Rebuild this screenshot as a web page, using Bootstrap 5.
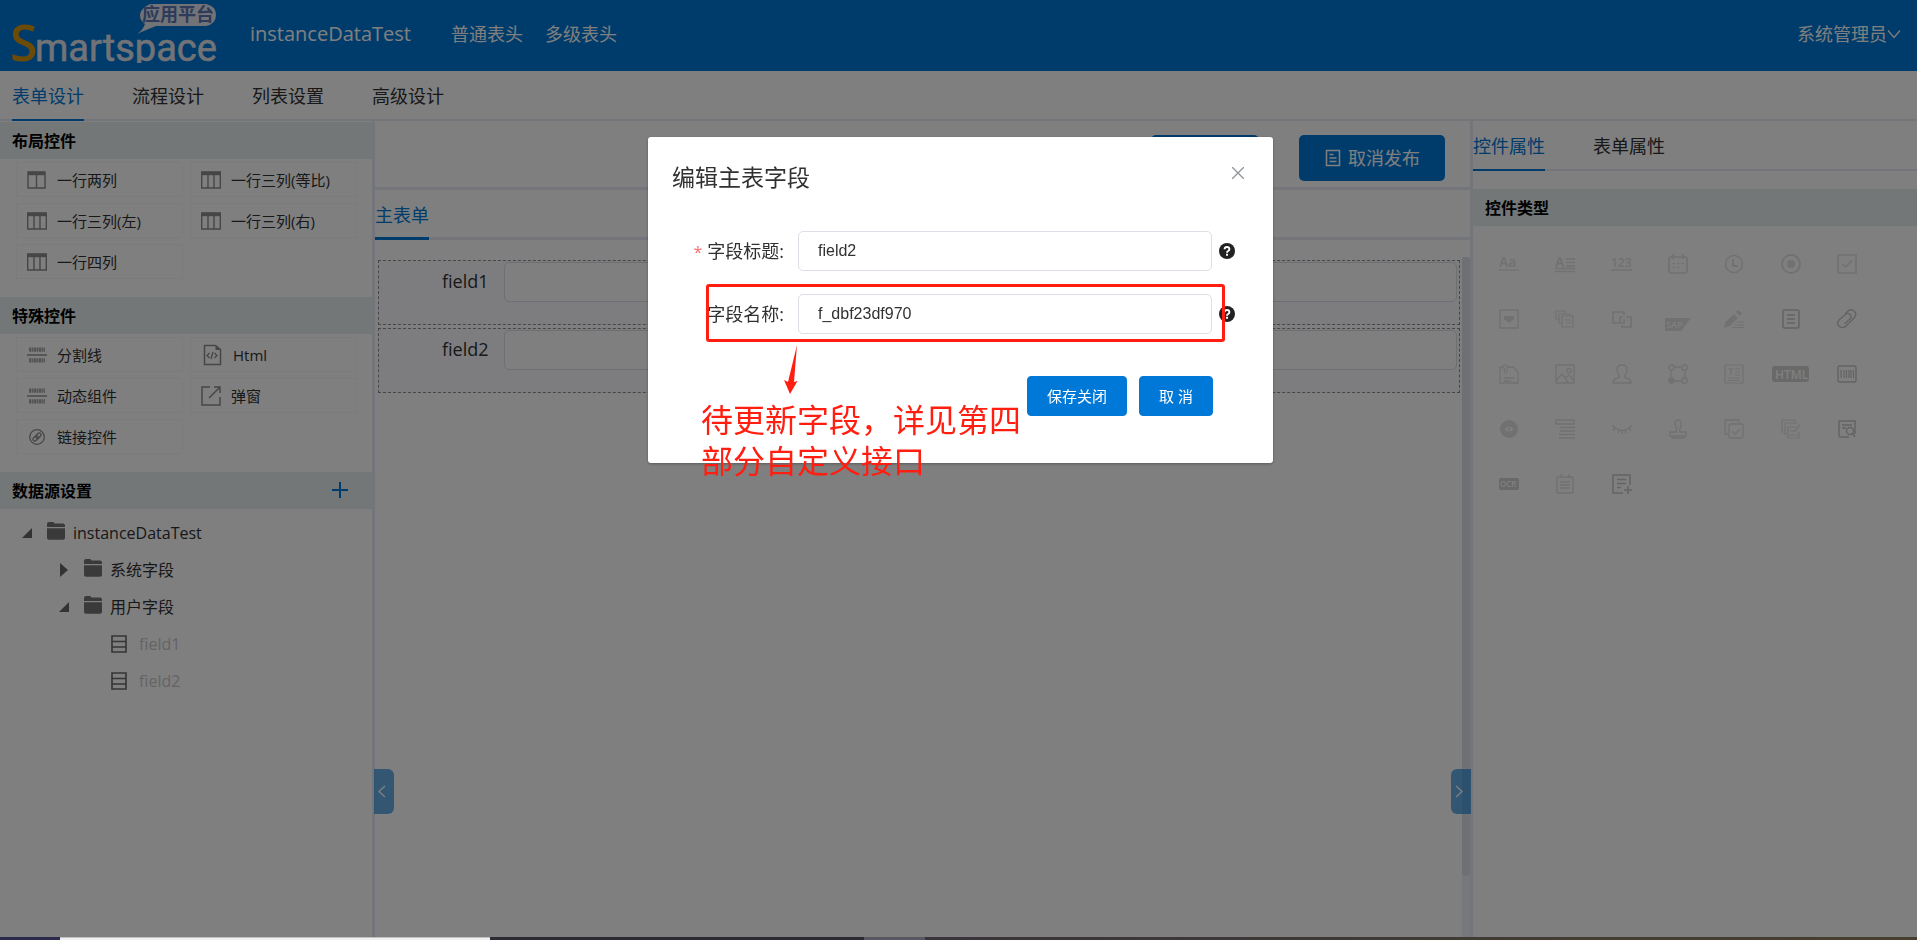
<!DOCTYPE html>
<html lang="zh-CN">
<head>
<meta charset="utf-8">
<meta name="viewport" content="width=device-width, initial-scale=1">
<title>instanceDataTest</title>
<link href="https://cdn.jsdelivr.net/npm/bootstrap@5.3.0/dist/css/bootstrap.min.css" rel="stylesheet">
<style>
:root{--brand:#0078d7;--line:#e9ebf5;--ink:#303133;--band:#e6eff0;--mark:#ff1e10}
body{font-family:"Open Sans","Noto Sans CJK SC",sans-serif;font-size:18px;line-height:24px;color:var(--ink);background:#fff;overflow:hidden}
a{text-decoration:none;color:inherit}
svg{display:block;flex:none}
.ico{fill:none;stroke:currentColor;stroke-width:2}
.topbar{background:var(--brand);min-height:71px;padding:4px 16px 8px 12px;color:#fff}
.topbar .links{gap:22px;margin-left:40px}
.app-title{font-size:20px;margin-left:32px}
.tabline{border-bottom:2px solid var(--line);gap:48px}
.tabline a{display:flex;align-items:center;margin-bottom:-2px;padding-top:2px;border-bottom:2px solid transparent}
.tabline a.active{color:var(--brand);border-color:var(--brand)}
.main-tabs{height:50px;padding-left:12px}
.side-tabs{height:50px}
.form-tabs{height:50px;border-width:3px}
.form-tabs a{margin-bottom:-3px;border-width:3px}
.left-pane{width:375px;border-right:3px solid var(--line);padding-top:1px}
.right-pane{width:447px;border-left:3px solid var(--line)}
.band{height:37px;background:var(--band);color:#000;font-size:16px;font-weight:700;padding:2px 12px 0;margin:0}
.tiles{display:grid;grid-template-columns:1fr 1fr;gap:6px 7px;padding:3px 15px 18px 16px;font-size:15px}
.tile{height:35px;border:1px solid #f7f7fd;background:none;padding:0 10px;gap:10px;color:var(--ink);text-align:left}
.tile svg{color:#8c8c8c}
.tree{font-size:16px;padding:5px 0 0 20px;margin:0;list-style:none}
.tree ul{list-style:none;margin:0;padding-left:37px}
.node{height:37px}
.node .twig{width:14px;margin-right:13px}
.node .folder{margin-right:8px;margin-bottom:3px;color:#757575}
.leaf{padding-left:17px;gap:12px;color:#c8c8c8}
.leaf svg{color:#6a6a6a}
.toolbar{height:69px;border-bottom:3px solid var(--line);padding:14px 25px 6px;gap:40px}
.btn-main{--bs-btn-bg:var(--brand);--bs-btn-border-color:var(--brand);--bs-btn-color:#fff;--bs-btn-hover-bg:#1688e0;--bs-btn-hover-color:#fff;--bs-btn-border-radius:5px;line-height:24px}
.toolbar .btn{font-size:18px;height:46px;min-width:108px;padding:0 25px 0 26px;gap:7px;border-width:0}
.canvas{padding:20px 2px 0 3px;gap:3px;min-width:0}
.form-line{height:65px;border:1px dashed #8c8c8c;background:#fafbff;padding:1px 2px}
.form-line label{flex:none;width:123px;text-align:right;line-height:38px}
.form-line label span{display:block;text-align:left;padding-left:61px}
.form-control{height:40px;border-color:#dcdfe6;border-radius:5px;color:var(--ink)}
.vbar{width:8px;margin-top:17px;background:#eef0f7}
.vbar div{height:91%;background:#dce0e6;border-radius:4px}
.handle{position:absolute;top:648px;width:20px;height:45px;border:0;background:rgba(0,120,215,.6);color:#fff;z-index:2}
.handle-l{left:-1px;border-radius:0 6px 6px 0}
.handle-r{right:-1px;border-radius:6px 0 0 6px}
.kinds{display:grid;grid-template-columns:repeat(7,1fr);padding:10px 42px 0 8px}
.kinds button{height:55px;border:0;background:none;padding:0;color:#e2e2e2;display:grid;place-items:center}
.kinds button.strong{color:#c6c6c6}
.kinds text{font-family:"Open Sans",sans-serif;font-weight:600;fill:currentColor;stroke:none}
.kinds .rev{fill:#fff}
.strip{height:3px;background:#35322f}
.strip .s1{width:60px;background:#2b2a4d}
.strip .s2{width:430px;background:#f0f0f0;border-top:1px solid #c0c0c0}
.strip .s3{width:374px;background:#2c2a32}
.strip .s4{width:61px;background:#5a5662}
.strip .s5{background:linear-gradient(90deg,#38343a,#47402f)}
.dim{position:fixed;inset:0 0 3px;background:rgba(0,0,0,.5);z-index:1050}
.modal{padding-left:4px}
.modal-dialog{max-width:625px;margin:137px auto 0}
.modal-content{border:0;border-radius:3px;padding:26px 24px 47px;box-shadow:0 1px 3px rgba(0,0,0,.3);color:#303133}
.modal-title{font-size:23px;line-height:28px;font-weight:400}
.close-x{border:0;background:none;padding:0 5px 0 0;color:#909399}
.fields{margin-top:40px;gap:23px}
.field-line label{width:126px;padding-right:14px;text-align:right}
.field-line label i{color:#f56c6c;font-style:normal;font-size:16px;margin-right:5px}
.field-line .form-control{width:414px;padding:0 19px;font:16px "Liberation Sans",sans-serif}
.field-line .hint{margin-left:7px;color:#222}
.acts{margin-top:42px;gap:12px;padding-right:36px}
.acts .btn{height:40px;font-size:15px;padding:0 19px;--bs-btn-border-radius:4px}
.ring{position:absolute;left:58px;top:147px;width:519px;height:58px;border:3px solid var(--mark);border-radius:3px;pointer-events:none}
.arrow{position:absolute;left:136px;top:208px;pointer-events:none}
.note{position:absolute;left:53px;top:261px;font-size:32px;line-height:41px;color:var(--mark);margin:0;white-space:nowrap;font-family:"Noto Sans CJK SC",sans-serif}
</style>
</head>
<body class="vh-100 d-flex flex-column">
<svg width="0" height="0" class="position-absolute" aria-hidden="true">
  <symbol id="cols2" viewBox="0 0 20 18"><path d="M1 1h17v16H1z" fill="none" stroke="currentColor" stroke-width="1.4"/><path d="M1 2.5h17" stroke="currentColor" stroke-width="3.4"/><path d="M9.5 3v14" stroke="currentColor" stroke-width="1.4"/></symbol>
  <symbol id="cols3" viewBox="0 0 20 18"><path d="M.7 1h18.6v16H.7z" fill="none" stroke="currentColor" stroke-width="1.4"/><path d="M1 2.5h18" stroke="currentColor" stroke-width="3.4"/><path d="M7 3v14M13 3v14" stroke="currentColor" stroke-width="1.4"/></symbol>
  <symbol id="split" viewBox="0 0 20 18"><path d="M0 9h20" stroke="currentColor" stroke-width="1.4"/><path d="M2 3.6h16M2 14.4h16" stroke="currentColor" stroke-width="4.4" stroke-dasharray="2 .5" opacity=".75"/></symbol>
  <symbol id="folder" viewBox="0 0 18 18"><path d="M0 2q0-2 2-2h4q1 0 1.600 1.500H16q2 0 2 2V5H0zM0 6.200h18V16q0 1.800-2 1.800H2q-2 0-2-1.800z" fill="currentColor"/></symbol>
  <symbol id="rows" viewBox="0 0 16 18"><path d="M1 1h14v16H1zM1 6.500h14M1 12h14" fill="none" stroke="currentColor" stroke-width="1.600"/></symbol>
  <symbol id="help" viewBox="0 0 16 16"><circle cx="8" cy="8" r="8" fill="currentColor"/><path d="M5.600 6.300Q5.700 4 8 4t2.400 2q0 1.300-1.300 2-1.100.6-1.100 1.700" fill="none" stroke="#fff" stroke-width="1.900"/><path d="M7 10.700h2v2H7z" fill="#fff"/></symbol>
</svg>

<header class="topbar d-flex align-items-center">
  <a href="#" aria-label="Smartspace 应用平台">
    <svg width="206" height="59" viewBox="0 0 206 59">
      <path d="M138 0h56q10 2 10 11t-10 11h-50q-8 3-19 8 6-4 8-10-5-3-5-9t10-11z" fill="#e4e6ee"/>
      <text x="130" y="17" font-size="18" font-weight="700" fill="#5c76b4" font-family="Noto Sans CJK SC">应用平台</text>
      <text x="-2" y="57" font-size="50" font-weight="600" fill="#d8960c" font-family="Open Sans">S</text>
      <text x="23" y="57" font-size="38" fill="#e4e6ee" stroke="#e4e6ee" stroke-width=".5" font-family="Roboto">martspace</text>
    </svg>
  </a>
  <span class="app-title">instanceDataTest</span>
  <nav class="links d-flex"><a href="#">普通表头</a><a href="#">多级表头</a></nav>
  <a href="#" class="ms-auto d-flex align-items-center">系统管理员<svg class="ico" width="14" height="10"><path d="M1 1.500l6 7 6-7" stroke-width="1.300"/></svg></a>
</header>

<nav class="tabline main-tabs d-flex flex-shrink-0"><a href="#" class="active">表单设计</a><a href="#">流程设计</a><a href="#">列表设置</a><a href="#">高级设计</a></nav>

<div class="d-flex flex-fill" style="min-height:0">
  <aside class="left-pane flex-shrink-0">
    <h2 class="band d-flex align-items-center">布局控件</h2>
    <div class="tiles">
      <button class="tile d-flex align-items-center"><svg width="20" height="18"><use href="#cols2"/></svg>一行两列</button>
      <button class="tile d-flex align-items-center"><svg width="20" height="18"><use href="#cols3"/></svg>一行三列(等比)</button>
      <button class="tile d-flex align-items-center"><svg width="20" height="18"><use href="#cols3"/></svg>一行三列(左)</button>
      <button class="tile d-flex align-items-center"><svg width="20" height="18"><use href="#cols3"/></svg>一行三列(右)</button>
      <button class="tile d-flex align-items-center"><svg width="20" height="18"><use href="#cols3"/></svg>一行四列</button>
    </div>
    <h2 class="band d-flex align-items-center">特殊控件</h2>
    <div class="tiles">
      <button class="tile d-flex align-items-center"><svg width="20" height="18"><use href="#split"/></svg>分割线</button>
      <button class="tile d-flex align-items-center"><svg class="ico" width="22" height="22" viewBox="0 0 22 22"><path d="M3.500 1.500h11l5 4v15h-16z" stroke-width="1.500"/><path d="M14.500 1v5h5z" fill="currentColor" stroke="none"/><path d="M8.500 9L6 11.500 8.500 14m5-5l2.500 2.500-2.500 2.500M12 8l-2 7" stroke-width="1.300"/></svg>Html</button>
      <button class="tile d-flex align-items-center"><svg width="20" height="18"><use href="#split"/></svg>动态组件</button>
      <button class="tile d-flex align-items-center"><svg class="ico" width="20" height="20" viewBox="0 0 20 20"><path d="M9 1H1v18h18v-8M13 1h6v6M19 1L8 12" stroke-width="1.500"/></svg>弹窗</button>
      <button class="tile d-flex align-items-center"><svg class="ico" width="20" height="18" viewBox="0 0 20 18"><circle cx="10" cy="9" r="7.300" stroke-width="1.300"/><g transform="rotate(-45 10 9)" stroke-width="1.300"><rect x="5" y="7.200" width="6" height="3.600" rx="1.800"/><rect x="9" y="7.200" width="6" height="3.600" rx="1.800"/></g></svg>链接控件</button>
    </div>
    <h2 class="band d-flex align-items-center justify-content-between">数据源设置<button class="border-0 bg-transparent p-0 pb-1 me-2 pe-1" aria-label="添加"><svg class="ico" width="16" height="16" style="color:var(--brand)"><path d="M8 0v16M0 8h16"/></svg></button></h2>
    <ul class="tree">
      <li>
        <div class="node d-flex align-items-center"><svg class="twig" width="14" height="12"><path d="M12 1v10H2z" fill="#666"/></svg><svg class="folder" width="18" height="18"><use href="#folder"/></svg>instanceDataTest</div>
        <ul>
          <li><div class="node d-flex align-items-center"><svg class="twig" width="14" height="14"><path d="M3 0v14l8-7z" fill="#666"/></svg><svg class="folder" width="18" height="18"><use href="#folder"/></svg>系统字段</div></li>
          <li>
            <div class="node d-flex align-items-center"><svg class="twig" width="14" height="12"><path d="M12 1v10H2z" fill="#666"/></svg><svg class="folder" width="18" height="18"><use href="#folder"/></svg>用户字段</div>
            <ul>
              <li class="node leaf d-flex align-items-center"><svg width="16" height="18"><use href="#rows"/></svg>field1</li>
              <li class="node leaf d-flex align-items-center"><svg width="16" height="18"><use href="#rows"/></svg>field2</li>
            </ul>
          </li>
        </ul>
      </li>
    </ul>
  </aside>

  <main class="flex-fill d-flex flex-column position-relative" style="min-width:0">
    <div class="toolbar d-flex justify-content-end">
      <button class="btn btn-main" aria-label="保存"></button>
      <button class="btn btn-main d-flex align-items-center"><svg class="ico" width="16" height="18" viewBox="0 0 16 18"><path d="M1.500 1.500h13v15h-13zM4.500 5.500h4M4.500 9h7M4.500 12.500h7" stroke-width="1.500"/></svg>取消发布</button>
    </div>
    <nav class="tabline form-tabs d-flex flex-shrink-0"><a href="#" class="active">主表单</a></nav>
    <div class="d-flex flex-fill" style="min-height:0">
      <div class="canvas flex-fill d-flex flex-column">
        <div class="form-line d-flex"><label for="f1"><span>field1</span></label><input id="f1" class="form-control flex-fill"></div>
        <div class="form-line d-flex"><label for="f2"><span>field2</span></label><input id="f2" class="form-control flex-fill"></div>
      </div>
      <div class="vbar"><div></div></div>
    </div>
    <button class="handle handle-l d-flex align-items-center p-0 ps-1" aria-label="收起左栏"><svg class="ico" width="8" height="13"><path d="M7 1L1 6.500 7 12" stroke-width="1.300"/></svg></button>
    <button class="handle handle-r d-flex align-items-center p-0 ps-1" aria-label="收起右栏"><svg class="ico" width="8" height="13"><path d="M1 1l6 5.500L1 12" stroke-width="1.300"/></svg></button>
  </main>

  <aside class="right-pane flex-shrink-0">
    <nav class="tabline side-tabs d-flex"><a href="#" class="active">控件属性</a><a href="#">表单属性</a></nav>
    <h2 class="band d-flex align-items-center" style="margin-top:18px">控件类型</h2>
    <div class="kinds">
      <button aria-label="单行文本"><svg class="ico" width="20" height="20"><text x="0" y="13" font-size="14">Aa</text><path d="M0 16h20" stroke-width="1.300"/></svg></button>
      <button aria-label="多行文本"><svg class="ico" width="20" height="20"><text x="0" y="13" font-size="14">A</text><path d="M11 5h9M11 8.500h9M11 12h9M0 14.500h20M0 17.500h20" stroke-width="1.300"/></svg></button>
      <button aria-label="数字"><svg class="ico" width="22" height="20"><text x="0" y="13" font-size="12">123</text><path d="M0 16h21" stroke-width="1.500"/></svg></button>
      <button aria-label="日期"><svg class="ico" width="20" height="20"><rect x="1" y="3" width="18" height="16" rx="2" stroke-width="1.600"/><path d="M5 0v5M15 0v5M4.500 9.500h2.500M9 9.500h2.500M13.500 9.500H16M4.500 13.500h2.500M9 13.500h2.500" stroke-width="1.600"/></svg></button>
      <button aria-label="时间"><svg class="ico" width="20" height="20"><circle cx="10" cy="10" r="8.500" stroke-width="1.500"/><path d="M9 5v7h5"/></svg></button>
      <button aria-label="单选"><svg class="ico" width="20" height="20"><circle cx="10" cy="10" r="9"/><circle cx="10" cy="10" r="4" fill="currentColor" stroke="none"/></svg></button>
      <button aria-label="多选"><svg class="ico" width="20" height="20"><path d="M1 1h18v18H1zM5.500 10l3.500 3 6-6.500" stroke-width="1.600"/></svg></button>

      <button aria-label="下拉"><svg class="ico" width="20" height="20"><path d="M1 1h18v18H1z" stroke-width="1.400"/><path d="M5 7h10v3l-5 4-5-4z" fill="currentColor" stroke="none"/></svg></button>
      <button aria-label="关联"><svg class="ico" width="20" height="20"><path d="M4 10H1V2h9v3M15 7V5H4v9h3M7 7h11v11H7zM10 11h6M10 14h6" stroke-width="1.200"/></svg></button>
      <button aria-label="组合"><svg class="ico" width="20" height="20"><path d="M8 14H1V3h11v3M12 10v4H8V8h3M14 8h5v10h-9v-2" stroke-width="1.600"/></svg></button>
      <button aria-label="SAP"><svg width="26" height="24"><path d="M0 11h26L16 24H0z" fill="currentColor"/><text class="rev" x="1" y="21" font-size="9">SAP</text></svg></button>
      <button aria-label="签名"><svg class="ico" width="20" height="20"><path d="M0 19l1.500-6L10 5l4 4-8 8z" fill="currentColor" stroke="none"/><path d="M12 3l2-2 4 3-2 3z" fill="currentColor" stroke="none"/><path d="M13 13h7M10 16h10M8 18.500h12" stroke-width="1.200"/></svg></button>
      <button class="strong" aria-label="文档"><svg class="ico" width="20" height="20"><rect x="2" y="1" width="16" height="18" rx="1.500" stroke-width="1.500"/><path d="M6 6h8M6 10h8M6 14h8" stroke-width="1.300"/></svg></button>
      <button class="strong" aria-label="附件"><svg class="ico" width="20" height="20"><path d="M8 5l3-3q3-2.500 6 0t1 6l-9 9q-3 3-6.500.5T2 11l7-6q2-1.500 4 .5t.5 4l-6 5.500" stroke-width="1.400"/></svg></button>

      <button aria-label="附件文档"><svg class="ico" width="20" height="20"><path d="M8 3h6l5 5v11H1V3h3M5 14h10M5 17h7" stroke-width="1.300"/><path d="M4 5V2q2-2.500 4 0v6q-1 2-2.500 0V4" stroke-width="1.100"/></svg></button>
      <button aria-label="图片"><svg class="ico" width="20" height="20"><path d="M1 1h18v18H1zM1 17l6-7 6 8M10 14l4-3 5 6" stroke-width="1.400"/><circle cx="14" cy="6.500" r="2.200" stroke-width="1.300"/></svg></button>
      <button aria-label="人员"><svg class="ico" width="20" height="20"><path d="M7.500 12Q5 9 5 6q0-5 5-5t5 5q0 3-2.500 6 0 2 3 2.500Q19 15.500 19 19H1q0-3.500 3.500-4.500 3-.5 3-2.500z" stroke-width="1.400"/></svg></button>
      <button aria-label="部门"><svg class="ico" width="20" height="20"><path d="M3 3h14v14H3z" stroke-width="1.300"/><g fill="#fff" stroke-width="1.400"><circle cx="3.500" cy="3.500" r="2.700"/><circle cx="16.500" cy="3.500" r="2.700"/><circle cx="16.500" cy="16.500" r="2.700"/></g><circle cx="3.500" cy="16.500" r="3.300" fill="currentColor" stroke="none"/></svg></button>
      <button aria-label="富文本"><svg class="ico" width="20" height="20"><path d="M1 1h18v18H1zM4 5h6M7 5v6M11 5h5M11 8h5M11 11h5M4 14h12M4 16.500h12" stroke-width="1.200"/></svg></button>
      <button aria-label="HTML"><svg width="38" height="20"><rect x="0" y="2" width="37" height="16" rx="3" fill="#d2d2d2"/><text class="rev" x="3" y="15" font-size="12">HTML</text></svg></button>
      <button class="strong" aria-label="条码"><svg class="ico" width="20" height="20"><rect x="1" y="2" width="18" height="16" rx="1.500" stroke-width="1.400"/><path d="M4 6v8M7 6v8M9.500 6v8M12 6v8M14 6v8M16.500 6v8" stroke-width="1.200"/></svg></button>

      <button aria-label="查看"><svg width="20" height="20"><circle cx="10" cy="10" r="9" fill="currentColor"/><path d="M5.500 10q4.500-5 9 0-4.500 5-9 0z" fill="#fff"/><circle cx="10" cy="10" r="1.400" fill="currentColor"/></svg></button>
      <button aria-label="列表"><svg class="ico" width="20" height="20"><path d="M1 1h18v4H1zM5 8.500h15M5 12h15M4 15.500h16M4 19h16" stroke-width="1.400"/></svg></button>
      <button aria-label="隐藏"><svg class="ico" width="20" height="20"><path d="M0 6q10 11 20 0M3 9l-2 3M7 11l-1 3M10 12v3M13 11l1 3M17 9l2 3" stroke-width="1.500"/></svg></button>
      <button aria-label="印章"><svg class="ico" width="20" height="20"><path d="M8 13q1.500-3-.5-6Q6 1 10 1t3 6q-2 3-1 6h6v4H2v-4zM4 17v2h12v-2" stroke-width="1.400"/></svg></button>
      <button aria-label="批量选择"><svg class="ico" width="20" height="20"><path d="M4 15H1V1h14v3M8 12l3 3 5-5" stroke-width="1.300"/><rect x="5" y="5" width="14" height="14" rx="2" stroke-width="1.300"/></svg></button>
      <button aria-label="批量编辑"><svg class="ico" width="20" height="20"><path d="M3 13H1V1h13v2M6 15H4V4h12M18 13v6H7V8h8M9 12h4M9 16h8M19 6l-6 7" stroke-width="1.200"/></svg></button>
      <button class="strong" aria-label="查询"><svg class="ico" width="20" height="20"><path d="M12 18H3q-1 0-1-1V2h16v13M5 6h10M5 9h4" stroke-width="1.500"/><circle cx="13" cy="12" r="3.500" stroke-width="1.400"/><path d="M15.500 14.500L18 18" stroke-width="1.400"/></svg></button>

      <button aria-label="OCR"><svg width="20" height="20"><rect y="4" width="20" height="12" rx="2" fill="#d2d2d2"/><text class="rev" x="1" y="13" font-size="8">OCR</text></svg></button>
      <button aria-label="记录"><svg class="ico" width="20" height="20"><rect x="2" y="3" width="16" height="16" rx="1" stroke-width="1.400"/><path d="M6 0v4M14 0v4M5 8h10M5 11h10M5 14h10" stroke-width="1.400"/></svg></button>
      <button class="strong" aria-label="新增表单"><svg class="ico" width="20" height="20"><path d="M11 19H1V1h17v10M5 5.500h9M5 9.500h9M5 13.500h4M16 12v8M12 16h8" stroke-width="1.500"/></svg></button>
    </div>
  </aside>
</div>

<div class="strip d-flex flex-shrink-0"><div class="s1"></div><div class="s2"></div><div class="s3"></div><div class="s4"></div><div class="s5 flex-fill"></div></div>

<div class="dim"></div>
<div class="modal d-block" role="dialog" aria-labelledby="dlg">
  <div class="modal-dialog">
    <form class="modal-content">
      <div class="d-flex justify-content-between">
        <h1 class="modal-title" id="dlg">编辑主表字段</h1>
        <button type="button" class="close-x d-flex" aria-label="关闭"><svg class="ico mt-1" width="12" height="12"><path d="M0 0l12 12M12 0L0 12" stroke-width="1.300"/></svg></button>
      </div>
      <div class="fields d-flex flex-column">
        <div class="field-line d-flex align-items-center"><label for="t1"><i>*</i>字段标题:</label><input id="t1" class="form-control" value="field2"><svg class="hint" width="16" height="16"><use href="#help"/></svg></div>
        <div class="field-line d-flex align-items-center"><label for="t2">字段名称:</label><input id="t2" class="form-control" value="f_dbf23df970"><svg class="hint" width="16" height="16"><use href="#help"/></svg></div>
      </div>
      <div class="acts d-flex justify-content-end">
        <button type="button" class="btn btn-main">保存关闭</button>
        <button type="button" class="btn btn-main">取 消</button>
      </div>
      <div class="ring"></div>
      <svg class="arrow" width="16" height="50"><path d="M13 0l-3 37 3.500-1L6 49 0 35l4 2z" fill="#ff1e10"/></svg>
      <p class="note">待更新字段，详见第四<br>部分自定义接口</p>
    </form>
  </div>
</div>
<script src="https://cdn.jsdelivr.net/npm/bootstrap@5.3.0/dist/js/bootstrap.bundle.min.js"></script>
</body>
</html>
